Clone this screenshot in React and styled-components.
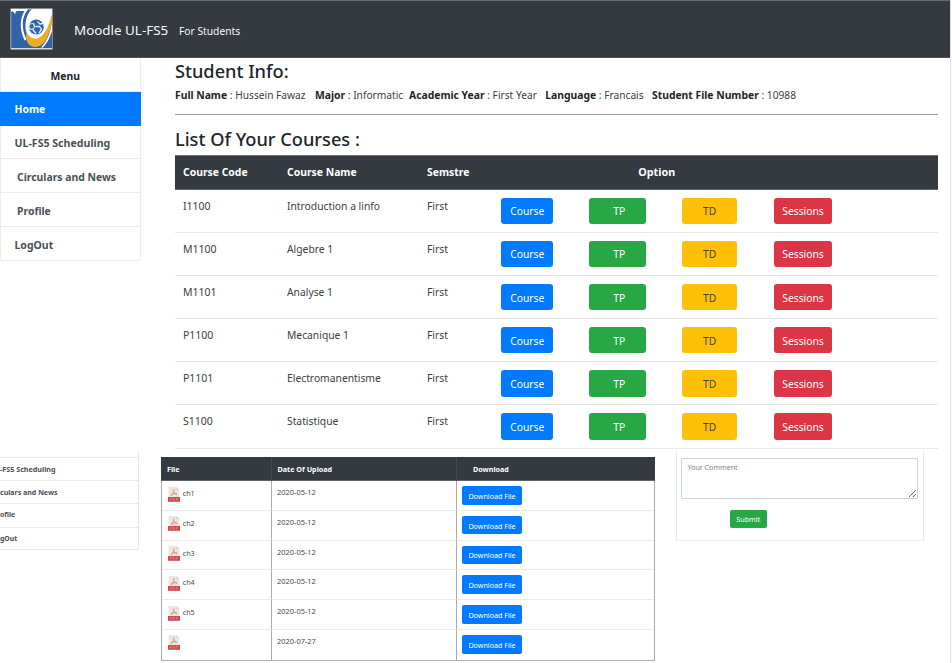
import React from "react";
import styled, { createGlobalStyle } from "styled-components";

const colors = {
  dark: "#343a40",
  text: "#212529",
  muted: "#495057",
  blue: "#007bff",
  green: "#28a745",
  yellow: "#ffc107",
  red: "#dc3545",
};

const GlobalStyle = createGlobalStyle`
  *, *::before, *::after { box-sizing: border-box; }
  body {
    margin: 0;
    background: #fff;
    color: ${colors.text};
    font-family: "Noto Sans", "Open Sans", sans-serif;
    font-size: 10.3px;
    line-height: 16px;
    overflow: hidden;
  }
`;

const Page = styled.div`
  width: 951px;
  height: 663px;
  border-right: 1px solid #dfe0e1;
  overflow: hidden;
`;

const Header = styled.header`
  display: flex;
  align-items: center;
  height: 58px;
  padding: 1px 0 0 10px;
  background: ${colors.dark};
  border-top: 1px solid #6a6e73;
  border-bottom: 1px solid #4d5257;
  color: #f8f9fa;
`;

const Logo = styled.svg`
  width: 43px;
  height: 42px;
  margin-top: -2px;
`;

const Brand = styled.span`
  width: 105px;
  margin-left: 21px;
  font-size: 13.4px;
  white-space: nowrap;
`;

const BrandNote = styled.span`
  margin-top: 2px;
  font-size: 10.25px;
`;

const TopSection = styled.section`
  display: flex;
  align-items: flex-start;
  height: 394px;
`;

const Sidebar = styled.nav`
  width: 141px;
  height: 203px;
  border: 1px solid #ebecee;
  border-top: 0;
  border-radius: 0 0 3px 3px;
`;

const SideItem = styled.div`
  display: flex;
  align-items: center;
  height: 33.8px;
  margin: 0 -1px;
  padding: 2.4px 0 0 ${(p) => p.$indent}px;
  border-bottom: ${(p) => (p.$last ? 0 : "1px solid #e9eaec")};
  background: ${(p) => (p.$active ? colors.blue : "transparent")};
  border-color: ${(p) => (p.$active ? colors.blue : "#e9eaec")};
  color: ${(p) => (p.$active ? "#fff" : p.$title ? colors.text : colors.muted)};
  font-size: ${(p) => p.$size || 10.4}px;
  font-weight: 700;
  white-space: nowrap;
`;

const Main = styled.main`
  width: 763px;
  margin-left: 34px;
`;

const Heading = styled.h3`
  margin: 0;
  padding-top: ${(p) => p.$top}px;
  font-size: 18.2px;
  font-weight: 500;
  line-height: 24px;
`;

const InfoLine = styled.div`
  display: grid;
  grid-template-columns: 140px 94px 136.3px 106.7px 1fr;
  height: 28.5px;
  margin-top: 3px;
  border-bottom: 1px solid #999b9d;
  font-size: 10.2px;
  line-height: 19px;
  color: #3a3e42;
  white-space: nowrap;
`;

const InfoLabel = styled.b`
  font-size: 10.35px;
  color: ${colors.text};
`;

const CourseTable = styled.div`
  margin-top: 4px;
`;

const CourseGrid = styled.div`
  display: grid;
  grid-template-columns: 104px 140px 74.3px 88px 92.7px 91.8px 1fr;
  padding-left: 8px;
`;

const CourseHead = styled(CourseGrid)`
  height: 35px;
  align-items: center;
  background: ${colors.dark};
  border-top: 1px solid #6a6e73;
  border-bottom: 1px solid #5d6267;
  color: #fff;
  font-weight: 700;
  font-size: 10.4px;
`;

const OptionTitle = styled.span`
  grid-column: 4 / 8;
  padding-left: 137px;
  font-size: 10.75px;
`;

const CourseRow = styled(CourseGrid)`
  height: 43.2px;
  padding-top: 8px;
  border-bottom: 1px solid #e6e7e9;
  font-size: 10.3px;
  color: #3a3e42;
`;

const Cell = styled.span``;

const CodeCell = styled(Cell)`
  font-size: 10.5px;
`;

const Button = styled.button`
  width: ${(p) => p.$width}px;
  height: 26.3px;
  padding: 1px 0 0;
  border: 0;
  border-radius: 3px;
  background: ${(p) => colors[p.$tone]};
  color: ${(p) => (p.$tone === "yellow" ? "#4a4220" : "#fff")};
  font: 400 10.3px/16px "Noto Sans", "Open Sans", sans-serif;
`;

const CourseButton = styled(Button)`
  padding-left: ${(p) => p.$shift || 0}px;
`;

const BottomSection = styled.section`
  display: flex;
  align-items: flex-start;
  height: 211px;
  font-size: 7.2px;
  line-height: 12px;
`;

const SecondMenu = styled.nav`
  width: 139px;
  height: 98px;
  padding-top: 5px;
  border-right: 1px solid #e6e7e9;
  border-bottom: 1px solid #e6e7e9;
`;

const SecondMenuItem = styled.div`
  height: 23.2px;
  border-top: 1px solid #e9eaec;
  color: ${colors.muted};
  font-size: ${(p) => p.$size}px;
  font-weight: 700;
  line-height: 22.5px;
  white-space: nowrap;
`;

const FileTable = styled.div`
  width: 494px;
  margin: 5px 0 0 22px;
  border: 1px solid #a9abae;
  border-top: 0;
`;

const FileGrid = styled.div`
  display: grid;
  grid-template-columns: 110px 185px 1fr;
`;

const FileHead = styled(FileGrid)`
  height: 24px;
  margin: 0 -1px;
  padding-left: 1px;
  background: ${colors.dark};
  border-bottom: 1px solid #5d6267;
  color: #fff;
  font-weight: 700;
`;

const FileHeadCell = styled.span`
  padding-left: ${(p) => p.$indent}px;
  border-right: ${(p) => (p.$last ? 0 : "1px solid #454b51")};
  line-height: 24px;
`;

const FileRow = styled(FileGrid)`
  height: 29.8px;
`;

const FileCell = styled.div`
  display: flex;
  align-items: flex-start;
  padding: 5px 0 0 5px;
  border-right: ${(p) => (p.$last ? 0 : "1px solid #a9abae")};
  border-bottom: ${(p) => (p.$final ? 0 : "1px solid #e9eaec")};
  color: #45494d;
`;

const PdfIcon = styled.svg`
  width: 12px;
  height: 15px;
  margin: 0.5px 3px 0 0.7px;
`;

const FileName = styled.span`
  margin-top: 1px;
`;

const UploadDate = styled.span`
  font-size: 7.45px;
`;

const SmallButton = styled(Button)`
  width: ${(p) => p.$width}px;
  height: 18.7px;
  border-radius: 2px;
  font-size: 7.15px;
  line-height: 12px;
`;

const CommentCard = styled.form`
  width: 248px;
  height: 89px;
  margin-left: 21px;
  padding: 6px 5px 0 4px;
  border: 1px solid #e9eaec;
  border-top: 0;
`;

const CommentField = styled.textarea`
  display: block;
  width: 237px;
  height: 40.5px;
  margin: 0 0 11px;
  padding: 2.4px 5.5px;
  border: 1px solid #ced4da;
  border-radius: 1px;
  outline: 0;
  resize: vertical;
  font: 400 7.1px/12px "Noto Sans", "Open Sans", sans-serif;

  &::placeholder {
    color: #7b838b;
    opacity: 1;
  }
`;

const SubmitRow = styled.div`
  display: flex;
  padding-left: 49px;
`;

const menu = [
  { label: "Menu", indent: 50.5, title: true },
  { label: "Home", indent: 14.5, active: true },
  { label: "UL-FS5 Scheduling", indent: 14.5, size: 10.6 },
  { label: "Circulars and News", indent: 17 },
  { label: "Profile", indent: 17 },
  { label: "LogOut", indent: 14.5, size: 10.5 },
];

const secondMenu = [
  { label: "-FS5 Scheduling", size: 7.2 },
  { label: "culars and News", size: 7.05 },
  { label: "ofile", size: 6.9 },
  { label: "gOut", size: 6.9 },
];

const info = [
  ["Full Name", "Hussein Fawaz"],
  ["Major", "Informatic"],
  ["Academic Year", "First Year"],
  ["Language", "Francais"],
  ["Student File Number", "10988"],
];

const courses = [
  ["I1100", "Introduction a linfo"],
  ["M1100", "Algebre 1"],
  ["M1101", "Analyse 1"],
  ["P1100", "Mecanique 1"],
  ["P1101", "Electromanentisme"],
  ["S1100", "Statistique"],
];

const files = [
  ["ch1", "2020-05-12"],
  ["ch2", "2020-05-12"],
  ["ch3", "2020-05-12"],
  ["ch4", "2020-05-12"],
  ["ch5", "2020-05-12"],
  ["", "2020-07-27"],
];

function UniversityLogo() {
  return (
    <Logo viewBox="0 0 43 42">
      <rect x="0.5" y="0.5" width="42" height="41" fill="#d5dae1" />
      <rect x="1.2" y="1.5" width="40.8" height="38.5" fill="#3263a8" />
      <path d="M1 1H17V3H7C5.5 3.5 5.5 5 5 6.5C4.5 5 4 3.5 1 3.5Z" fill="#fff" />
      <path d="M17 1C11 9 10 20 15.5 32" fill="none" stroke="#fff" strokeWidth="2" />
      <path d="M22 1H42V12C39 24 35 31 27 32C20 31 16 27 15.5 20C15 12 17.5 5 22 1Z" fill="#fff" />
      <path d="M42 5V14C39 29 34 39 25 39C18 38.500 15.500 33 16 25C19 29 23 31.500 27 30.500C34 28.500 39 19 42 5Z" fill="#ecae20" />
      <path d="M42 14C40 26 37 33 31 39.500L42 40Z" fill="#fff" />
      <path d="M42 23C39.500 31 37 35 32.500 40H42Z" fill="#3263a8" />
      <circle cx="26.3" cy="19" r="7.5" fill="#3263a8" />
      <path d="M19.500 15.500L24 15L25.500 18.500L23 22L19 21.500L18.500 18Z" fill="#dce6f3" />
      <path d="M20 16.500L23 16L24 19L22 21L19.500 19.500Z" fill="#3263a8" />
      <path d="M27.500 13.500L30 16L33 15.500M25.500 18.500L29.500 18.500L31.500 21.500L29 25M23 22L26 25.500" fill="none" stroke="#e8eff8" strokeWidth="1.3" />
    </Logo>
  );
}

function Pdf() {
  return (
    <PdfIcon viewBox="0 0 12 15">
      <path d="M0.5 0H8.5L11.5 3V11H0.5Z" fill="#e9e8df" />
      <path d="M8.5 0V3H11.5Z" fill="#d4d3ca" />
      <path
        d="M5.5 2.2C6.7 3 5.8 4.7 5.4 5.5C4.700 7 3.700 8.500 3 8.500C2.900 7.500 5.200 6.800 7 6.600C8.400 6.600 9.300 6.900 9 7.300C8 7.500 6 6 5.400 4.300"
        fill="none"
        stroke="#dc8484"
        strokeWidth="0.9"
      />
      <path d="M0 10H12V14.800H0Z" fill="#d2484b" />
      <path
        d="M2.5 13.5V11.2H3.6Q4.5 11.9 3.6 12.5H2.5M5.3 11.2H6.1Q7.4 12.3 6.1 13.4H5.3ZM8.4 13.6V11.2H9.8M8.4 12.3H9.6"
        fill="none"
        stroke="#e89a9c"
        strokeWidth="0.5"
      />
    </PdfIcon>
  );
}

export default function App() {
  return (
    <>
      <GlobalStyle />
      <Page>
        <Header>
          <UniversityLogo />
          <Brand>Moodle UL-FS5</Brand>
          <BrandNote>For Students</BrandNote>
        </Header>

        <TopSection>
          <Sidebar>
            {menu.map((m, i) => (
              <SideItem
                key={m.label}
                $indent={m.indent}
                $active={m.active}
                $title={m.title}
                $size={m.size}
                $last={i === menu.length - 1}
              >
                {m.label}
              </SideItem>
            ))}
          </Sidebar>

          <Main>
            <Heading $top={1}>Student Info:</Heading>
            <InfoLine>
              {info.map(([label, value]) => (
                <span key={label}>
                  <InfoLabel>{label}</InfoLabel> : {value}
                </span>
              ))}
            </InfoLine>
            <Heading $top={12}>List Of Your Courses :</Heading>
            <CourseTable>
              <CourseHead>
                <span>Course Code</span>
                <span>Course Name</span>
                <span>Semstre</span>
                <OptionTitle>Option</OptionTitle>
              </CourseHead>
              {courses.map(([code, name]) => (
                <CourseRow key={code}>
                  <CodeCell>{code}</CodeCell>
                  <Cell>{name}</Cell>
                  <Cell>First</Cell>
                  <CourseButton $tone="blue" $width={52}>Course</CourseButton>
                  <CourseButton $tone="green" $width={57} $shift={3}>TP</CourseButton>
                  <CourseButton $tone="yellow" $width={55.5}>TD</CourseButton>
                  <CourseButton $tone="red" $width={58.5}>Sessions</CourseButton>
                </CourseRow>
              ))}
            </CourseTable>
          </Main>
        </TopSection>

        <BottomSection>
          <SecondMenu>
            {secondMenu.map((m) => (
              <SecondMenuItem key={m.label} $size={m.size}>
                {m.label}
              </SecondMenuItem>
            ))}
          </SecondMenu>

          <FileTable>
            <FileHead>
              <FileHeadCell $indent={5}>File</FileHeadCell>
              <FileHeadCell $indent={5.5}>Date Of Upload</FileHeadCell>
              <FileHeadCell $indent={16} $last>Download</FileHeadCell>
            </FileHead>
            {files.map(([name, date], i) => {
              const final = i === files.length - 1;
              return (
                <FileRow key={name || "untitled"}>
                  <FileCell $final={final}>
                    <Pdf />
                    <FileName>{name}</FileName>
                  </FileCell>
                  <FileCell $final={final}>
                    <UploadDate>{date}</UploadDate>
                  </FileCell>
                  <FileCell $final={final} $last>
                    <SmallButton $tone="blue" $width={60}>Download File</SmallButton>
                  </FileCell>
                </FileRow>
              );
            })}
          </FileTable>

          <CommentCard>
            <CommentField placeholder="Your Comment" />
            <SubmitRow>
              <SmallButton type="button" $tone="green" $width={36.5}>Submit</SmallButton>
            </SubmitRow>
          </CommentCard>
        </BottomSection>
      </Page>
    </>
  );
}
